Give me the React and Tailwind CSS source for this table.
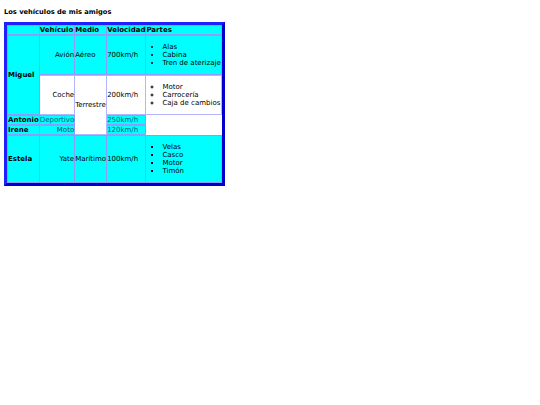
import React from 'react';

const cyan = 'bg-[#00ffff]';
const cell = 'border border-l-0 border-[#8f9cff] p-0 align-middle';
const first = 'border border-[#8f9cff] p-0 align-middle';

const Lista = ({ items, tipo }) => (
  <ul className={`${tipo} pl-[16px] my-[7px]`}>
    {items.map((it) => (
      <li key={it}>{it}</li>
    ))}
  </ul>
);

export default function App() {
  return (
    <div className="min-h-[405px] bg-white p-[4px] text-black" style={{ fontFamily: '"DejaVu Sans", Verdana, sans-serif' }}>
      <h4 className="text-[6.7px] font-bold leading-[8px] mt-[4px] mb-[6px]">Los vehículos de mis amigos</h4>
      <table className="border-separate border-spacing-0 border-[3px] border-t-[#2020ff] border-l-[#2020ff] border-r-[#0000c8] border-b-[#0000c8] text-[7px] leading-[8px]">
        <tbody>
          <tr>
            <th className={`${first} ${cyan}`}></th>
            <th className={`${cell} ${cyan} text-left`}>Vehículo</th>
            <th className={`${cell} ${cyan} text-left`}>Medio</th>
            <th className={`${cell} ${cyan} text-left`}>Velocidad</th>
            <th className={`${cell} ${cyan} text-left`}>Partes</th>
          </tr>
          <tr>
            <th rowSpan={2} className={`${first} ${cyan} text-left`}>Miguel</th>
            <td className={`${cell} ${cyan} text-right`}>Avión</td>
            <td className={`${cell} ${cyan}`}>Aéreo</td>
            <td className={`${cell} ${cyan}`}>700km/h</td>
            <td className={`${cell} ${cyan}`}>
              <Lista tipo="list-disc" items={['Alas', 'Cabina', 'Tren de aterizaje']} />
            </td>
          </tr>
          <tr>
            <td className={`${cell} bg-white border-[#b4b4ff] text-right`}>Coche</td>
            <td rowSpan={3} className={`${cell} bg-white border-[#b4b4ff]`}>Terrestre</td>
            <td className={`${cell} bg-white border-[#b4b4ff]`}>200km/h</td>
            <td className={`${cell} bg-white border-[#b4b4ff]`}>
              <Lista tipo="list-[circle]" items={['Motor', 'Carrocería', 'Caja de cambios']} />
            </td>
          </tr>
          <tr>
            <th className={`${first} ${cyan} text-left`}>Antonio</th>
            <td className={`${cell} ${cyan} text-[#005a78]`}>Deportivo</td>
            <td className={`${cell} ${cyan} text-[#005a78]`}>250km/h</td>
          </tr>
          <tr>
            <th className={`${first} ${cyan} text-left`}>Irene</th>
            <td className={`${cell} ${cyan} text-right text-[#1e4656]`}>Moto</td>
            <td className={`${cell} ${cyan} text-[#005a78]`}>120km/h</td>
          </tr>
          <tr>
            <th className={`${first} ${cyan} text-left`}>Estela</th>
            <td className={`${cell} ${cyan} text-right`}>Yate</td>
            <td className={`${cell} ${cyan}`}>Marítimo</td>
            <td className={`${cell} ${cyan}`}>100km/h</td>
            <td className={`${cell} ${cyan}`}>
              <Lista tipo="list-[square]" items={['Velas', 'Casco', 'Motor', 'Timón']} />
            </td>
          </tr>
        </tbody>
      </table>
    </div>
  );
}
